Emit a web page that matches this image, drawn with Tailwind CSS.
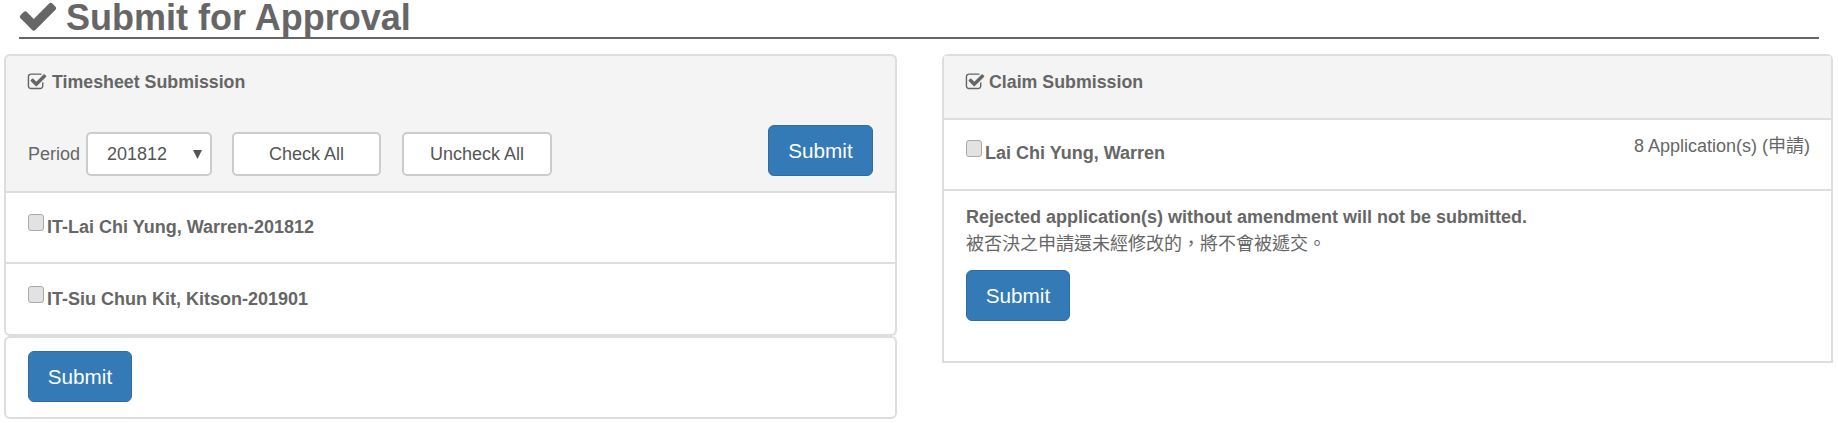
<!DOCTYPE html>
<html lang="zh-Hant">
<head>
<meta charset="utf-8">
<script src="https://cdn.jsdelivr.net/npm/@tailwindcss/browser@4"></script>
</head>
<body class="bg-white text-[#666] text-[18px] font-['Liberation_Sans','Noto_Sans_CJK_TC',sans-serif]">
<div class="w-[1838px] h-[423px] overflow-hidden pl-[4px] pr-[4px]">
  <div class="ml-[15px] w-[1800px] h-[39px] border-b-2 border-[#666] flex items-start">
    <svg class="shrink-0 w-[42px] h-[42px] mt-[-5px] ml-[-2px] fill-[#666]" viewBox="0 0 1792 1792"><path d="M1671 566q0 40-28 68l-724 724-136 136q-28 28-68 28t-68-28l-136-136-362-362q-28-28-28-68t28-68l136-136q28-28 68-28t68 28l294 295 656-657q28-28 68-28t68 28l136 136q28 28 28 68z"/></svg>
    <h1 class="ml-[7px] text-[36px] leading-[36px] font-bold">Submit for Approval</h1>
  </div>
  <div class="flex gap-[45px] mt-[15px] items-start">
    <div class="w-[893px]">
      <div class="h-[139px] bg-[#f4f4f4] border-2 border-[#ddd] rounded-t-[6px] px-[22px] pt-[14px]">
        <div class="flex items-center h-[24px] font-bold text-[17.8px]">
          <svg class="shrink-0 w-[20px] h-[20px] ml-[-1px] fill-[#666] mr-[5px]" viewBox="0 0 1792 1792"><path d="M1472 930v318q0 119-84.5 203.5t-203.5 84.5h-832q-119 0-203.5-84.5t-84.5-203.5v-832q0-119 84.5-203.5t203.5-84.5h832q63 0 117 25 15 7 18 23 3 17-9 29l-49 49q-10 10-23 10-3 0-9-2-23-6-45-6h-832q-66 0-113 47t-47 113v832q0 66 47 113t113 47h832q66 0 113-47t47-113v-254q0-13 9-22l64-64q10-10 23-10 6 0 12 3 20 8 20 29zm231-489l-814 814q-24 24-57 24t-57-24l-430-430q-24-24-24-57t24-57l110-110q24-24 57-24t57 24l263 263 647-647q24-24 57-24t57 24l110 110q24 24 24 57t-24 57z"/></svg>
          <span>Timesheet Submission</span>
        </div>
        <div class="flex items-end mt-[31px]">
          <div class="flex items-center h-[44px]">
            <span class="w-[58px]">Period</span>
            <div class="relative w-[126px] h-[44px]">
              <select class="appearance-none w-full h-full bg-white border-2 border-[#ccc] rounded-[5px] pl-[19px] text-[#555]"><option>201812</option></select>
              <svg class="absolute right-[10px] top-[18px] w-[9px] h-[9px] fill-[#555] pointer-events-none" viewBox="0 0 9 9"><polygon points="0,0 9,0 4.5,9"/></svg>
            </div>
            <button class="ml-[20px] w-[149px] h-[44px] bg-white border-2 border-[#ccc] rounded-[5px] text-[#555]">Check All</button>
            <button class="ml-[21px] w-[150px] h-[44px] bg-white border-2 border-[#ccc] rounded-[5px] text-[#555]">Uncheck All</button>
          </div>
          <button class="ml-auto w-[105px] h-[51px] bg-[#337ab7] border border-[#2e6da4] rounded-[6px] text-white text-[20.7px]">Submit</button>
        </div>
      </div>
      <div class="border-2 border-t-0 border-[#ddd] rounded-b-[6px]">
        <div class="h-[69px] pl-[22px] pt-[21px] flex items-start font-bold">
          <input type="checkbox" class="appearance-none w-[16px] h-[17px] bg-[#e2e2e2] border border-[#aaa] rounded-[3px] mr-[3px]">
          <span>IT-Lai Chi Yung, Warren-201812</span>
        </div>
        <div class="h-[72px] border-t-2 border-[#ddd] pl-[22px] pt-[22px] flex items-start font-bold">
          <input type="checkbox" class="appearance-none w-[16px] h-[17px] bg-[#e2e2e2] border border-[#aaa] rounded-[3px] mr-[3px]">
          <span>IT-Siu Chun Kit, Kitson-201901</span>
        </div>
      </div>
      <div class="h-[83px] border-2 border-[#ddd] rounded-[6px] pl-[22px] pt-[13px]">
        <button class="w-[104px] h-[51px] bg-[#337ab7] border border-[#2e6da4] rounded-[6px] text-white text-[20.7px]">Submit</button>
      </div>
    </div>
    <div class="w-[891px] border-2 border-[#ddd] rounded-t-[6px]">
      <div class="h-[64px] bg-[#f4f4f4] border-b-2 border-[#ddd] px-[22px] pt-[14px] flex items-start font-bold text-[17.8px]">
        <svg class="shrink-0 w-[20px] h-[20px] mt-[2px] ml-[-1px] fill-[#666] mr-[4px]" viewBox="0 0 1792 1792"><path d="M1472 930v318q0 119-84.5 203.5t-203.5 84.5h-832q-119 0-203.5-84.5t-84.5-203.5v-832q0-119 84.5-203.5t203.5-84.5h832q63 0 117 25 15 7 18 23 3 17-9 29l-49 49q-10 10-23 10-3 0-9-2-23-6-45-6h-832q-66 0-113 47t-47 113v832q0 66 47 113t113 47h832q66 0 113-47t47-113v-254q0-13 9-22l64-64q10-10 23-10 6 0 12 3 20 8 20 29zm231-489l-814 814q-24 24-57 24t-57-24l-430-430q-24-24-24-57t24-57l110-110q24-24 57-24t57 24l263 263 647-647q24-24 57-24t57 24l110 110q24 24 24 57t-24 57z"/></svg>
        <span class="leading-[24px]">Claim Submission</span>
      </div>
      <div class="h-[71px] border-b-2 border-[#ddd] pl-[22px] pr-[21px] pt-[20px] flex items-start">
        <input type="checkbox" class="appearance-none w-[16px] h-[17px] bg-[#e2e2e2] border border-[#aaa] rounded-[3px] mr-[3px]">
        <span class="font-bold">Lai Chi Yung, Warren</span>
        <span class="ml-auto mt-[-7px]">8 Application(s) (申請)</span>
      </div>
      <div class="h-[170px] pl-[22px] pt-[13px]">
        <div class="font-bold leading-[26px]">Rejected application(s) without amendment will not be submitted.</div>
        <div class="mt-[1px] leading-[26px]">被否決之申請還未經修改的，將不會被遞交。</div>
        <button class="mt-[13px] w-[104px] h-[51px] bg-[#337ab7] border border-[#2e6da4] rounded-[6px] text-white text-[20.7px]">Submit</button>
      </div>
    </div>
  </div>
</div>
</body>
</html>
